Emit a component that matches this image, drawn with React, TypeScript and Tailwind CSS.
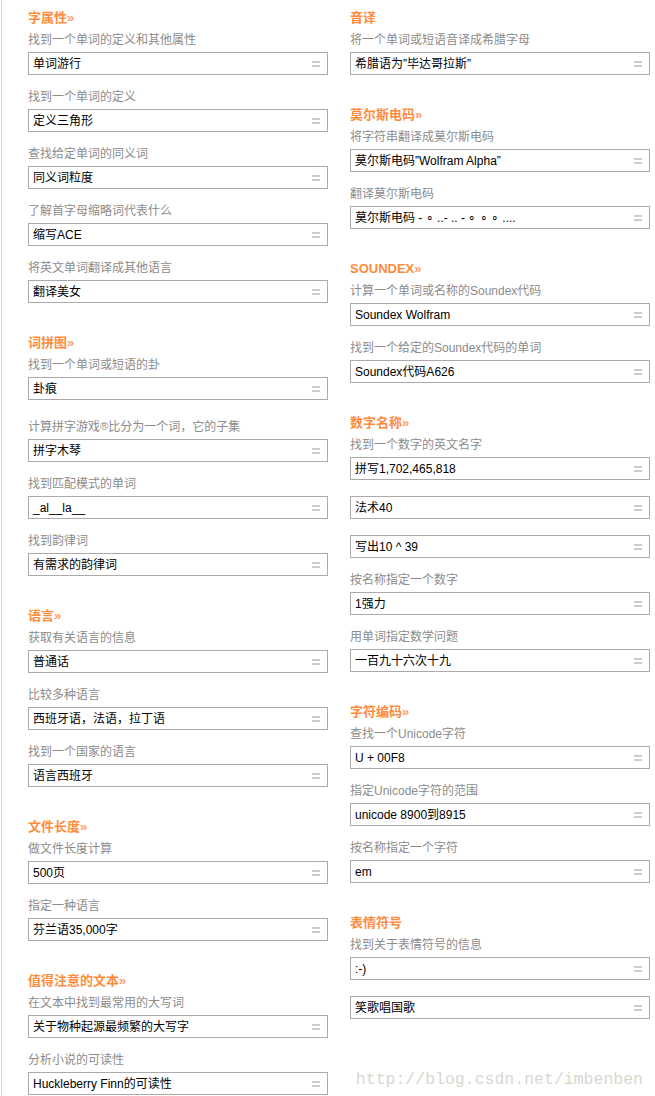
type Item = { label?: string; value: string; tall?: boolean };
type Section = { title: string; more?: boolean; items: Item[] };

const left: Section[] = [
    {
        title: "字属性",
        more: true,
        items: [
            { label: "找到一个单词的定义和其他属性", value: "单词游行" },
            { label: "找到一个单词的定义", value: "定义三角形" },
            { label: "查找给定单词的同义词", value: "同义词粒度" },
            { label: "了解首字母缩略词代表什么", value: "缩写ACE" },
            { label: "将英文单词翻译成其他语言", value: "翻译美女" },
        ],
    },
    {
        title: "词拼图",
        more: true,
        items: [
            { label: "找到一个单词或短语的卦", value: "卦痕" },
            { label: "计算拼字游戏®比分为一个词，它的子集", value: "拼字木琴", tall: true },
            { label: "找到匹配模式的单词", value: "_al__la__" },
            { label: "找到韵律词", value: "有需求的韵律词" },
        ],
    },
    {
        title: "语言",
        more: true,
        items: [
            { label: "获取有关语言的信息", value: "普通话" },
            { label: "比较多种语言", value: "西班牙语，法语，拉丁语" },
            { label: "找到一个国家的语言", value: "语言西班牙" },
        ],
    },
    {
        title: "文件长度",
        more: true,
        items: [
            { label: "做文件长度计算", value: "500页" },
            { label: "指定一种语言", value: "芬兰语35,000字" },
        ],
    },
    {
        title: "值得注意的文本",
        more: true,
        items: [
            { label: "在文本中找到最常用的大写词", value: "关于物种起源最频繁的大写字" },
            { label: "分析小说的可读性", value: "Huckleberry Finn的可读性" },
        ],
    },
];

const right: Section[] = [
    {
        title: "音译",
        items: [{ label: "将一个单词或短语音译成希腊字母", value: "希腊语为\u201d毕达哥拉斯\u201d" }],
    },
    {
        title: "莫尔斯电码",
        more: true,
        items: [
            { label: "将字符串翻译成莫尔斯电码", value: "莫尔斯电码\u201dWolfram Alpha\u201d" },
            { label: "翻译莫尔斯电码", value: "莫尔斯电码 - ∘ ..- .. - ∘ ∘ ∘ ...." },
        ],
    },
    {
        title: "SOUNDEX",
        more: true,
        items: [
            { label: "计算一个单词或名称的Soundex代码", value: "Soundex Wolfram" },
            { label: "找到一个给定的Soundex代码的单词", value: "Soundex代码A626" },
        ],
    },
    {
        title: "数字名称",
        more: true,
        items: [
            { label: "找到一个数字的英文名字", value: "拼写1,702,465,818" },
            { value: "法术40" },
            { value: "写出10 ^ 39" },
            { label: "按名称指定一个数字", value: "1强力" },
            { label: "用单词指定数学问题", value: "一百九十六次十九" },
        ],
    },
    {
        title: "字符编码",
        more: true,
        items: [
            { label: "查找一个Unicode字符", value: "U + 00F8" },
            { label: "指定Unicode字符的范围", value: "unicode 8900到8915" },
            { label: "按名称指定一个字符", value: "em" },
        ],
    },
    {
        title: "表情符号",
        items: [{ label: "找到关于表情符号的信息", value: ":-)" }, { value: "笑歌唱国歌" }],
    },
];

const Label = ({ text, first, tall }: { text: string; first: boolean; tall?: boolean }) => {
    const parts = text.split("®");
    const gap = first ? "mt-[4px]" : tall ? "mt-[18px]" : "mt-[13px]";
    return (
        <p className={`h-[18px] leading-[18px] text-[12px] text-[#8c8c8c] ${gap}`}>
            {parts[0]}
            {parts.length > 1 && (
                <>
                    <sup className="text-[11px] relative -top-[1px]">®</sup>
                    {parts[1]}
                </>
            )}
        </p>
    );
};

const Box = ({ value, spaced }: { value: string; spaced: boolean }) => (
    <div
        className={`flex items-center justify-between h-[23px] border border-[#aaaaaa] bg-white pl-[4px] pr-[7px] ${
            spaced ? "mt-[16px]" : "mt-[3px]"
        }`}
    >
        <span className="text-[12px] leading-none text-black whitespace-nowrap">{value}</span>
        {/* the little "=" grip */}
        <span className="flex flex-col gap-[2px]">
            <span className="block w-[8px] h-[2px] bg-[#cccccc]" />
            <span className="block w-[8px] h-[2px] bg-[#cccccc]" />
        </span>
    </div>
);

const Column = ({ sections }: { sections: Section[] }) => (
    <div className="w-[300px] pt-[9px]">
        {sections.map((section, i) => (
            <div key={section.title} className={i === 0 ? "" : "mt-[31px]"}>
                <h2 className="h-[18px] leading-[18px] text-[13px] font-bold text-[#ff8c3c]">
                    {section.title}
                    {section.more && <span className="text-[#ff9a6a]">»</span>}
                </h2>
                <div className="flex flex-col">
                    {section.items.map((item, j) => (
                        <div key={j}>
                            {item.label && <Label text={item.label} first={j === 0} tall={item.tall} />}
                            <Box value={item.value} spaced={!item.label} />
                        </div>
                    ))}
                </div>
            </div>
        ))}
    </div>
);

const App = () => {
    return (
        <div
            className="relative w-[655px] h-[1096px] bg-white overflow-hidden pl-px"
            style={{ fontFamily: '"Liberation Sans", "Noto Sans CJK SC", sans-serif' }}
        >
            <div className="h-full border-l border-[#d4d4d4] pl-[26px] flex gap-[22px]">
                <Column sections={left} />
                <Column sections={right} />
            </div>

            {/* blog watermark */}
            <span className="absolute right-[12px] bottom-[8px] text-[16.5px] leading-none text-[#d8d8d0] font-['Liberation_Mono',monospace] select-none">
                http://blog.csdn.net/imbenben
            </span>
        </div>
    );
};

export default App;
